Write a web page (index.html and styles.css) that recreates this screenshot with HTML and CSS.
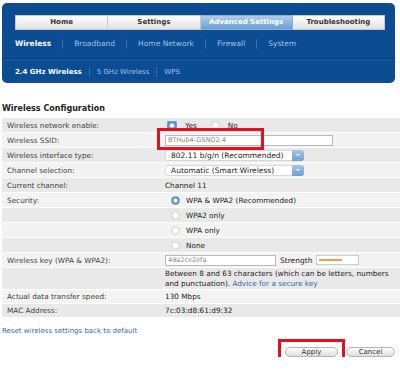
FILE: index.html
```html
<!DOCTYPE html>
<html lang="en">
<head>
    <meta charset="UTF-8">
    <title>Advanced Settings - Wireless</title>
    <link rel="stylesheet" href="styles.css">
</head>
<body>
    <!-- Blue navigation panel -->
    <div class="header">
        <div class="tabs">
            <div class="tab">Home</div>
            <div class="tab">Settings</div>
            <div class="tab tab-active">Advanced Settings</div>
            <div class="tab">Troubleshooting</div>
        </div>
        <div class="subnav">
            <span class="nav-item current">Wireless</span>
            <span class="nav-item">Broadband</span>
            <span class="nav-item">Home Network</span>
            <span class="nav-item">Firewall</span>
            <span class="nav-item">System</span>
        </div>
        <div class="subnav subnav-small">
            <span class="nav-item current">2.4 GHz Wireless</span>
            <span class="nav-item">5 GHz Wireless</span>
            <span class="nav-item">WPS</span>
        </div>
    </div>

    <h3 class="section-title">Wireless Configuration</h3>

    <div class="config">
        <div class="cfg-row">
            <div class="cfg-label">Wireless network enable:</div>
            <div class="cfg-value">
                <span class="radio radio-on"></span><span class="opt">Yes</span>
                <span class="radio"></span><span class="opt">No</span>
            </div>
        </div>
        <div class="cfg-row">
            <div class="cfg-label">Wireless SSID:</div>
            <div class="cfg-value marked">
                <div class="field field-ssid">BTHub4-GSNQ2.4</div>
                <div class="mark mark-ssid"></div>
            </div>
        </div>
        <div class="cfg-row">
            <div class="cfg-label">Wireless interface type:</div>
            <div class="cfg-value">
                <div class="select">802.11 b/g/n (Recommended)<span class="select-btn"></span></div>
            </div>
        </div>
        <div class="cfg-row">
            <div class="cfg-label">Channel selection:</div>
            <div class="cfg-value">
                <div class="select">Automatic (Smart Wireless)<span class="select-btn"></span></div>
            </div>
        </div>
        <div class="cfg-row">
            <div class="cfg-label">Current channel:</div>
            <div class="cfg-value">Channel 11</div>
        </div>
        <div class="cfg-row">
            <div class="cfg-label">Security:</div>
            <div class="cfg-value indent"><span class="radio radio-sel"></span>WPA &amp; WPA2 (Recommended)</div>
        </div>
        <div class="cfg-row">
            <div class="cfg-label"></div>
            <div class="cfg-value indent"><span class="radio"></span>WPA2 only</div>
        </div>
        <div class="cfg-row">
            <div class="cfg-label"></div>
            <div class="cfg-value indent"><span class="radio"></span>WPA only</div>
        </div>
        <div class="cfg-row">
            <div class="cfg-label"></div>
            <div class="cfg-value indent"><span class="radio"></span>None</div>
        </div>
        <div class="cfg-row">
            <div class="cfg-label">Wireless key (WPA &amp; WPA2):</div>
            <div class="cfg-value">
                <div class="field field-key">49a2ce2efa</div>
                <span class="strength-label">Strength</span>
                <div class="strength"><span class="strength-bar"></span></div>
            </div>
        </div>
        <div class="cfg-row cfg-row-tall">
            <div class="cfg-label"></div>
            <div class="cfg-value note">Between 8 and 63 characters (which can be letters, numbers<br>and punctuation). <a href="#" class="link">Advice for a secure key</a></div>
        </div>
        <div class="cfg-row cfg-row-short">
            <div class="cfg-label">Actual data transfer speed:</div>
            <div class="cfg-value">130 Mbps</div>
        </div>
        <div class="cfg-row cfg-row-short">
            <div class="cfg-label">MAC Address:</div>
            <div class="cfg-value">7c:03:d8:61:d9:32</div>
        </div>
    </div>

    <a href="#" class="link reset">Reset wireless settings back to default</a>

    <div class="actions">
        <div class="marked">
            <button class="btn btn-apply">Apply</button>
            <div class="mark mark-apply"></div>
        </div>
        <button class="btn btn-cancel">Cancel</button>
    </div>
</body>
</html>
```

FILE: styles.css
```css
/* Page font and background */
body {
    margin: 0;
    font-family: "DejaVu Sans", Verdana, sans-serif;
    font-size: 7.3px;
    color: #333;
    background: #fff;
}
/* Blue navigation panel */
.header {
    margin: 3px 5px 0 2px;
    padding: 12px 10px 0 13px;
    background: #0b4c93;
    border-radius: 5px;
    height: 68px;
}
/* Top tab bar */
.tabs {
    display: flex;
    height: 15px;
}
.tab {
    width: 92px;
    line-height: 13px;
    text-align: center;
    font-weight: bold;
    font-size: 7px;
    color: #333;
    background: linear-gradient(#fdfdfd, #e3e3e3);
    border: 1px solid #c9c9c9;
    border-left: none;
}
.tab:first-child {
    border-left: 1px solid #c9c9c9;
}
.tab-active {
    color: #fff;
    background: linear-gradient(#b0cdea, #6c9dd2);
    border-color: #8bb0d8;
}
/* Second and third level navigation */
.subnav {
    display: flex;
    align-items: center;
    height: 28px;
    font-size: 7.5px;
}
.subnav-small {
    height: 25px;
    border-top: 1px solid #073a72;
    box-shadow: inset 0 1px 0 #1a5ca3;
    margin: 0 -10px 0 -13px;
    padding-left: 13px;
    font-size: 7px;
}
.nav-item {
    color: #9fc0e4;
    padding: 0 11px;
    border-left: 1px solid #3a6ea8;
    line-height: 10px;
}
.nav-item:first-child {
    padding-left: 0;
    border-left: none;
}
.subnav-small .nav-item {
    padding: 0 7px;
}
.subnav-small .nav-item:first-child {
    padding-left: 0;
}
.nav-item.current {
    color: #fff;
    font-weight: bold;
}
/* Section heading */
.section-title {
    margin: 21px 0 5px 2px;
    font-size: 8px;
    color: #222;
}
/* Configuration table */
.config {
    margin-left: 2px;
}
.cfg-row {
    display: grid;
    grid-template-columns: 163px 1fr;
    align-items: center;
    height: 14px;
    border-bottom: 1px solid #fff;
    background: #e9e9e9;
}
.cfg-row:nth-child(even) {
    background: #f3f3f3;
}
.cfg-row-tall {
    height: 21px;
}
.cfg-row-short {
    height: 13px;
}
.cfg-label {
    padding-left: 5px;
    color: #444;
}
.cfg-value {
    display: flex;
    align-items: center;
    color: #222;
}
.indent {
    padding-left: 6px;
}
.opt {
    margin: 0 14px 0 2px;
}
/* Radio buttons */
.radio {
    width: 7px;
    height: 7px;
    border-radius: 50%;
    background: radial-gradient(#fff 40%, #ddd);
    border: 1px solid #d4d4d4;
    margin-right: 6px;
}
.radio-sel {
    background: radial-gradient(#fff 30%, #7aaad8 45%, #4b86c4);
    border-color: #5b8fc7;
}
.radio-on {
    border-radius: 1px;
    width: 8px;
    height: 7px;
    background: radial-gradient(#fff 25%, #6da0d6 50%, #3f78b8);
    border-color: #6d9fd3;
    margin-left: 2px;
}
/* Text fields and selects */
.field {
    height: 9px;
    line-height: 9px;
    padding-left: 2px;
    border: 1px solid #b9b9b9;
    background: #fff;
    color: #888;
    font-size: 6.5px;
}
.field-ssid {
    width: 164px;
}
.field-key {
    width: 107px;
}
.select {
    position: relative;
    width: 132px;
    height: 9px;
    line-height: 9px;
    padding-left: 5px;
    border: 1px solid #d8d8d8;
    border-radius: 3px;
    background: #fff;
    color: #222;
    font-size: 7.5px;
}
.select-btn {
    position: absolute;
    right: -1px;
    top: -1px;
    width: 12px;
    height: 11px;
    border-radius: 0 3px 3px 0;
    background: linear-gradient(#a5c6e8, #6d9fd4);
}
.select-btn::after {
    content: "";
    position: absolute;
    left: 4px;
    top: 4px;
    border: 2px solid transparent;
    border-top: 2px solid #fff;
}
/* Key strength meter */
.strength-label {
    margin: 0 4px;
    font-size: 7.5px;
}
.strength {
    width: 39px;
    height: 8px;
    border: 1px solid #ccc;
    background: #fff;
    display: flex;
    align-items: center;
    padding-left: 2px;
}
.strength-bar {
    width: 23px;
    height: 2px;
    background: #f0a040;
}
.note {
    display: block;
    line-height: 10px;
    font-size: 7.3px;
    white-space: nowrap;
}
/* Links */
.link {
    color: #2f6aa7;
    text-decoration: none;
}
.reset {
    display: block;
    margin: 9px 0 0 2px;
    font-size: 7px;
}
/* Apply / Cancel buttons */
.actions {
    display: flex;
    justify-content: flex-end;
    gap: 8px;
    margin: 12px 5px 0 0;
}
.btn {
    height: 10px;
    padding: 0;
    font-family: "DejaVu Sans", Verdana, sans-serif;
    font-size: 7px;
    color: #333;
    background: linear-gradient(#fefefe, #dedede);
    border: 1px solid #b5b5b5;
    border-radius: 5px;
}
.btn-apply {
    width: 53px;
}
.btn-cancel {
    width: 49px;
}
/* Red annotation boxes drawn over the screenshot */
.marked {
    position: relative;
}
.mark {
    position: absolute;
    border: 3px solid #e4101d;
}
.mark-ssid {
    left: -8px;
    top: -7px;
    width: 101px;
    height: 16px;
}
.mark-apply {
    left: -7px;
    top: -8px;
    width: 61px;
    height: 22px;
}
```
